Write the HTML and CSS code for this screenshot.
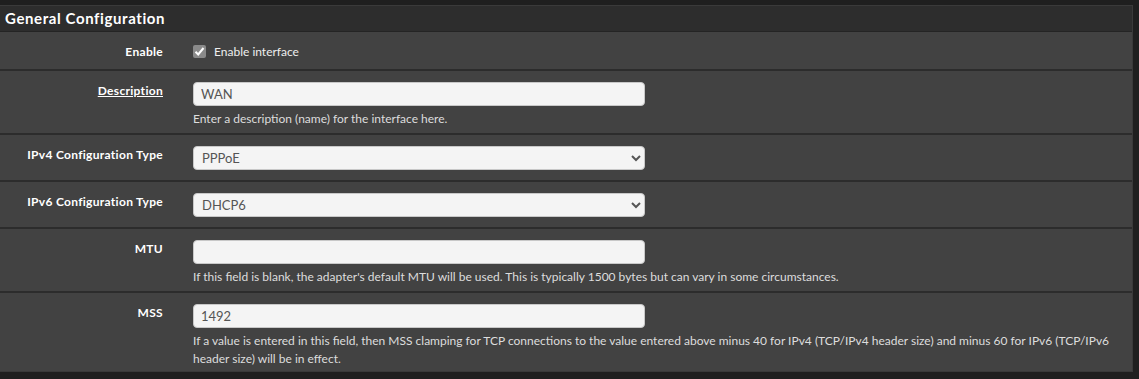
FILE: index.html
```html
<!DOCTYPE html>
<html lang="en">
<head>
  <meta charset="UTF-8" />
  <title>Interfaces / WAN</title>
  <link rel="stylesheet" href="styles.css">
</head>
<body>
  <div class="panel">
    <div class="panel-heading">General Configuration</div>
    <div class="panel-body">
      <div class="row row-enable">
        <label class="row-label">Enable</label>
        <div class="row-field">
          <label class="check">
            <span class="checkbox">
              <svg width="11" height="11" viewBox="0 0 11 11"><path d="M1.5 5.8 L4.2 8.5 L9.5 2" fill="none" stroke="#fff" stroke-width="2"/></svg>
            </span>
            Enable interface
          </label>
        </div>
      </div>
      <div class="row">
        <label class="row-label"><span class="underlined">Description</span></label>
        <div class="row-field">
          <input class="form-control" type="text" value="WAN">
          <span class="help">Enter a description (name) for the interface here.</span>
        </div>
      </div>
      <div class="row row-select">
        <label class="row-label">IPv4 Configuration Type</label>
        <div class="row-field">
          <select class="form-control"><option>PPPoE</option></select>
        </div>
      </div>
      <div class="row row-select">
        <label class="row-label">IPv6 Configuration Type</label>
        <div class="row-field">
          <select class="form-control"><option>DHCP6</option></select>
        </div>
      </div>
      <div class="row">
        <label class="row-label">MTU</label>
        <div class="row-field">
          <input class="form-control" type="text" value="">
          <span class="help">If this field is blank, the adapter's default MTU will be used. This is typically 1500 bytes but can vary in some circumstances.</span>
        </div>
      </div>
      <div class="row row-last">
        <label class="row-label">MSS</label>
        <div class="row-field">
          <input class="form-control" type="text" value="1492">
          <span class="help">If a value is entered in this field, then MSS clamping for TCP connections to the value entered above minus 40 for IPv4 (TCP/IPv4 header size) and minus 60 for IPv6 (TCP/IPv6 header size) will be in effect.</span>
        </div>
      </div>
    </div>
  </div>
</body>
</html>
```

FILE: styles.css
```css
body {
  margin: 0;
  padding: 5px 6px 0 0;
  background: #1f1f1f;
  font-family: Lato, "Open Sans", sans-serif;
  font-size: 12px;
  color: #fff;
}

.panel {
  background: #424242;
  border: 1px solid #3a3a3a;
  border-left: none;
}

.panel-heading {
  background: #2d2d2d;
  border-bottom: 1px solid #242424;
  padding: 0 5px;
  height: 25px;
  line-height: 25px;
  font-size: 15px;
  font-weight: bold;
  letter-spacing: 0.6px;
}

.row {
  display: flex;
  border-bottom: 2px solid #2c2c2c;
  padding: 11px 0 5px;
}

.row-enable {
  padding-bottom: 9px;
}

.row-select {
  padding-bottom: 10px;
}

.row-last {
  border-bottom: none;
  padding-bottom: 3px;
}

.row-label {
  width: 163px;
  flex: none;
  text-align: right;
  font-weight: bold;
  letter-spacing: 0.3px;
  padding-top: 1px;
  line-height: 16px;
}

.underlined {
  text-decoration: underline;
}

.row-field {
  margin-left: 30px;
  flex: 1;
  padding-right: 14px;
}

.check {
  display: flex;
  align-items: center;
  gap: 8px;
  height: 17px;
  color: #eee;
}

.checkbox {
  width: 13px;
  height: 13px;
  background: #8a8a8a;
  border-radius: 2px;
  display: flex;
  align-items: center;
  justify-content: center;
}

.form-control {
  display: block;
  box-sizing: border-box;
  width: 452px;
  height: 24px;
  margin: 0;
  padding: 2px 7px;
  background: #f4f4f4;
  border: 1px solid #c8c8c8;
  border-radius: 4px;
  color: #555;
  font-family: inherit;
  font-size: 13px;
}

select.form-control {
  padding: 2px 4px;
}

.help {
  display: block;
  margin-top: 4px;
  line-height: 18px;
  color: #ddd;
}
```
